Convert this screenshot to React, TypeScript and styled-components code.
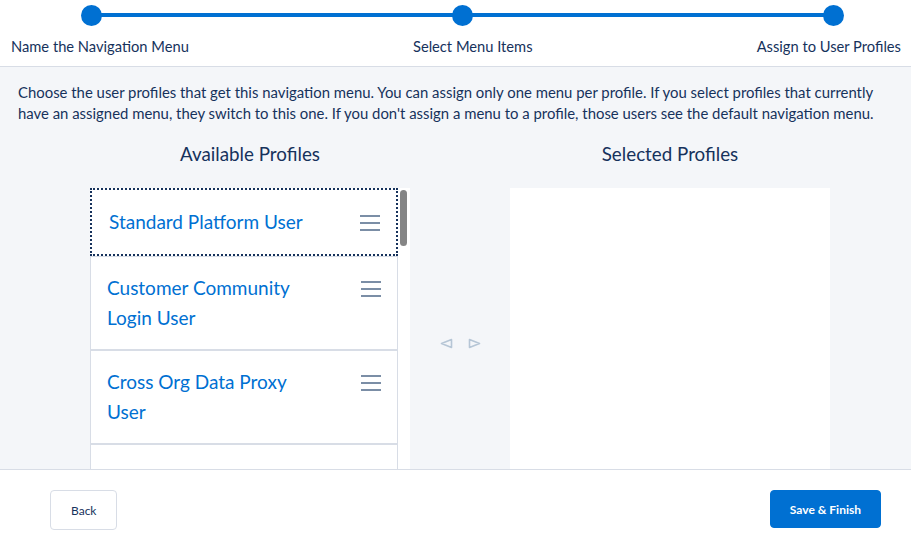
import React from "react";
import styled, { createGlobalStyle } from "styled-components";

const GlobalStyle = createGlobalStyle`
  html, body { margin: 0; padding: 0; height: 100%; }
  body {
    font-family: "Lato", "Open Sans", "Liberation Sans", sans-serif;
    color: #16325c;
    background: #ffffff;
  }
  #root { height: 100%; }
  * { box-sizing: border-box; }
`;

const Page = styled.div`
  height: 100vh;
  display: flex;
  flex-direction: column;
  overflow: hidden;
`;

const Header = styled.header`
  flex: 0 0 auto;
  height: 67px;
  background: #ffffff;
  border-bottom: 1px solid #d8dde6;
  padding-top: 13px;
`;

const Track = styled.div`
  position: relative;
  height: 4px;
  margin: 0 78px 0 91px;
  background: #0070d2;
`;

const Dot = styled.span<{ $at: number }>`
  position: absolute;
  top: 50%;
  left: ${(p) => p.$at}%;
  width: 21px;
  height: 21px;
  margin: -10.5px 0 0 -10.5px;
  border-radius: 50%;
  background: #0070d2;
`;

const StepLabels = styled.div`
  display: flex;
  justify-content: space-between;
  padding: 0 10px 0 11px;
  margin-top: 19px;
  font-size: 14.7px;
  line-height: 21px;
  color: #16325c;
`;

const Main = styled.main`
  flex: 1 1 auto;
  min-height: 0;
  overflow: hidden;
  background: #f4f6f9;
  padding: 15px 0 0 18px;
`;

const Description = styled.p`
  margin: 0;
  width: 870px;
  font-size: 14.9px;
  line-height: 21px;
  color: #16325c;
`;

const Columns = styled.div`
  display: grid;
  grid-template-columns: 320px 100px 320px;
  margin: 18px 0 0 72px;
`;

const ColumnTitle = styled.h2`
  margin: 0 0 22px;
  font-size: 18.8px;
  font-weight: 400;
  line-height: 24px;
  text-align: center;
  color: #16325c;
`;

const Column = styled.section`
  display: flex;
  flex-direction: column;
`;

const ListFrame = styled.div`
  display: flex;
  height: 320px;
`;

const List = styled.ul`
  list-style: none;
  margin: 0;
  padding: 0;
  width: 308px;
`;

const Item = styled.li<{ $focused?: boolean }>`
  display: flex;
  align-items: flex-start;
  justify-content: space-between;
  background: #ffffff;
  border: ${(p) => (p.$focused ? "2px dotted #16325c" : "1px solid #d8dde6")};
  padding: ${(p) => (p.$focused ? "17px 16px 17px 17px" : "16px 16px 16px 16px")};
  font-size: 19px;
  line-height: 30px;
  color: #0070d2;
`;

const ItemName = styled.span`
  max-width: 215px;
`;

const Handle = styled.span`
  display: flex;
  flex-direction: column;
  gap: 5px;
  width: 20px;
  margin-top: 8px;
  & > i {
    display: block;
    height: 2px;
    background: #7b8ea6;
  }
`;

const ScrollTrack = styled.div`
  width: 12px;
  background: #ffffff;
  padding: 2px 3px 0 2px;
`;

const Thumb = styled.div`
  width: 7px;
  height: 56px;
  border-radius: 4px;
  background: #858585;
`;

const Mover = styled.div`
  display: flex;
  align-items: center;
  justify-content: center;
  gap: 15px;
  padding: 37px 0 0 0;
`;

const SelectedBox = styled.div`
  height: 320px;
  background: #ffffff;
`;

const Footer = styled.footer`
  flex: 0 0 auto;
  height: 65px;
  background: #ffffff;
  border-top: 1px solid #d8dde6;
  display: flex;
  align-items: flex-start;
  justify-content: space-between;
  padding: 20px 30px 0 50px;
`;

const Button = styled.button<{ $brand?: boolean }>`
  height: ${(p) => (p.$brand ? "38px" : "40px")};
  padding: 0 ${(p) => (p.$brand ? "19px" : "20px")};
  border-radius: 4px;
  border: 1px solid ${(p) => (p.$brand ? "#0070d2" : "#d8dde6")};
  background: ${(p) => (p.$brand ? "#0070d2" : "#ffffff")};
  color: ${(p) => (p.$brand ? "#ffffff" : "#16325c")};
  font-family: "Lato", "Liberation Sans", sans-serif;
  font-size: 12px;
  font-weight: ${(p) => (p.$brand ? 700 : 400)};
  cursor: pointer;
`;

const Arrow = ({ dir }: { dir: "left" | "right" }) => (
  <svg width="13" height="11" viewBox="0 0 13 11" aria-hidden="true">
    {dir === "left" ? (
      <path d="M1.5 5.5 L11.5 1.5 L11.5 9.5 Z" fill="none" stroke="#b6c6d6" strokeWidth="1.6" strokeLinejoin="round" />
    ) : (
      <path d="M11.5 5.5 L1.5 1.5 L1.5 9.5 Z" fill="none" stroke="#b6c6d6" strokeWidth="1.6" strokeLinejoin="round" />
    )}
  </svg>
);

const profiles = [
  "Standard Platform User",
  "Customer Community Login User",
  "Cross Org Data Proxy User",
  "Authenticated Website",
];

export default function App() {
  return (
    <Page>
      <GlobalStyle />
      <Header>
        <Track>
          <Dot $at={0} />
          <Dot $at={50} />
          <Dot $at={100} />
        </Track>
        <StepLabels>
          <span>Name the Navigation Menu</span>
          <span>Select Menu Items</span>
          <span>Assign to User Profiles</span>
        </StepLabels>
      </Header>
      <Main>
        <Description>
          Choose the user profiles that get this navigation menu. You can assign only one menu per profile. If you select profiles that currently have an assigned menu, they switch to this one. If you don't assign a menu to a profile, those users see the default navigation menu.
        </Description>
        <Columns>
          <Column>
            <ColumnTitle>Available Profiles</ColumnTitle>
            <ListFrame>
              <List>
                {profiles.map((p, i) => (
                  <Item key={p} $focused={i === 0}>
                    <ItemName>{p}</ItemName>
                    <Handle>
                      <i />
                      <i />
                      <i />
                    </Handle>
                  </Item>
                ))}
              </List>
              <ScrollTrack>
                <Thumb />
              </ScrollTrack>
            </ListFrame>
          </Column>
          <Mover>
            <Arrow dir="left" />
            <Arrow dir="right" />
          </Mover>
          <Column>
            <ColumnTitle>Selected Profiles</ColumnTitle>
            <SelectedBox />
          </Column>
        </Columns>
      </Main>
      <Footer>
        <Button>Back</Button>
        <Button $brand>Save &amp; Finish</Button>
      </Footer>
    </Page>
  );
}
